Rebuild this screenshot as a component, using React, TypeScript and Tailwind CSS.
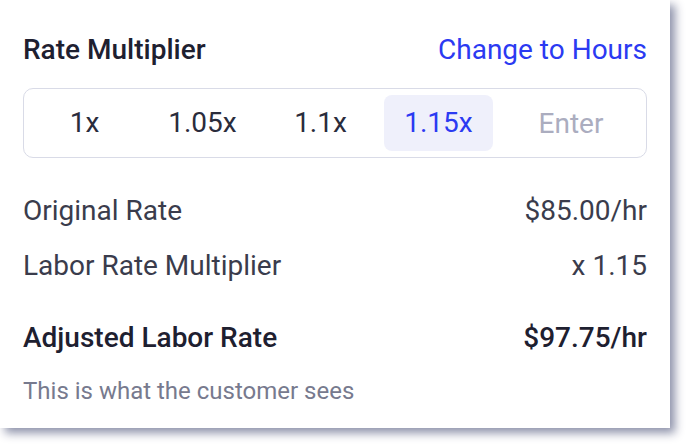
import { useState } from "react";

const options = ["1x", "1.05x", "1.1x", "1.15x"];

export default function App() {
  const [selected, setSelected] = useState("1.15x");

  return (
    <div className="h-[448px] w-[690px] bg-white font-['Roboto',sans-serif]">
      <div className="flex h-[428px] w-[670px] flex-col bg-white px-[23px] pt-8 shadow-[5px_5px_9px_rgba(135,140,165,0.95)]">
        {/* Header */}
        <div className="flex h-9 items-center justify-between">
          <h2 className="text-[28px] font-medium text-[#1e2030]">Rate Multiplier</h2>
          <button className="text-[28px] text-[#2b3af2]">Change to Hours</button>
        </div>

        {/* Multiplier picker */}
        <div className="mt-5 flex h-[70px] items-center gap-[9px] rounded-[10px] border border-[#d9dbe7] px-[6px]">
          {options.map((opt) => (
            <button
              key={opt}
              onClick={() => setSelected(opt)}
              className={
                opt === selected
                  ? "h-14 w-[109px] rounded-lg bg-[#eff0fb] text-[28px] text-[#2b3af2]"
                  : "h-14 w-[109px] rounded-lg text-[28px] text-[#2a2c3c]"
              }
            >
              {opt}
            </button>
          ))}
          <input
            placeholder="Enter"
            className="h-14 min-w-0 flex-1 bg-transparent text-center text-[28px] text-[#2a2c3c] outline-none placeholder:text-[#abadbf]"
          />
        </div>

        {/* Breakdown */}
        <div className="mt-[35px] flex h-9 items-center justify-between text-[28px] text-[#3a3c4c]">
          <span>Original Rate</span>
          <span>$85.00/hr</span>
        </div>
        <div className="mt-[19px] flex h-9 items-center justify-between text-[28px] text-[#3a3c4c]">
          <span>Labor Rate Multiplier</span>
          <span>x 1.15</span>
        </div>
        <div className="mt-9 flex h-9 items-center justify-between text-[28px] font-medium text-[#1e2030]">
          <span>Adjusted Labor Rate</span>
          <span>$97.75/hr</span>
        </div>
        <p className="mt-5 h-[30px] text-[24px] leading-[30px] text-[#777a8e]">
          This is what the customer sees
        </p>
      </div>
    </div>
  );
}
